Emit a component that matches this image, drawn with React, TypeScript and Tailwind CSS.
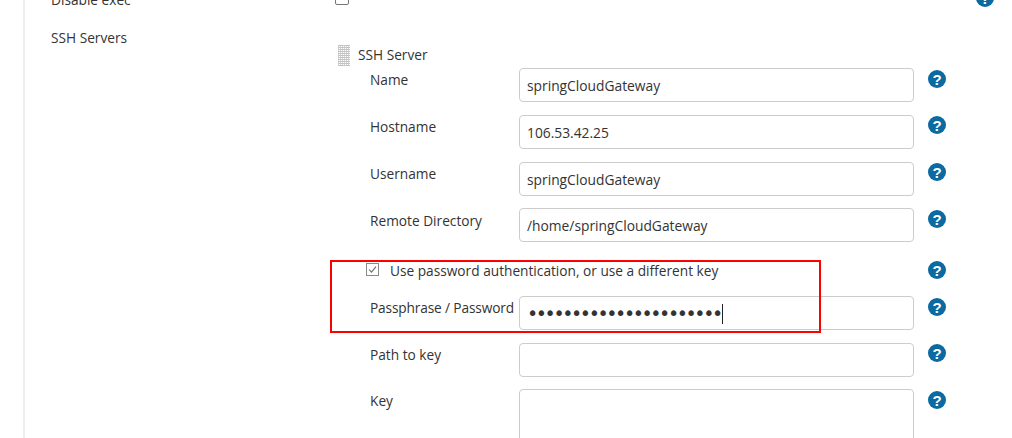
const font = { fontFamily: '"Open Sans","Noto Sans",sans-serif' };

function Help({ className = "" }: { className?: string }) {
  return (
    <div className={"w-[18px] h-[18px] rounded-full bg-[#0b6aa2] text-white flex items-center justify-center shrink-0 text-[15px] leading-none font-bold " + className} style={{ fontFamily: '"Liberation Sans",sans-serif' }}>
      ?
    </div>
  );
}

function Row({ label, value, mt, dots, tall, labelClass = "pt-[2px]", helpClass = "mt-[2px]" }: { label: string; value?: string; mt: string; dots?: boolean; tall?: boolean; labelClass?: string; helpClass?: string }) {
  return (
    <div className={"flex items-start " + mt}>
      <div className={"w-[149px] shrink-0 text-[13.7px] leading-[20px] whitespace-nowrap " + labelClass}>{label}</div>
      <div className={(tall ? "h-[70px] " : "h-[34px] ") + "w-[395px] shrink-0 rounded-[4px] border border-[#cccccc] bg-white pl-[7px] pt-[3px] flex items-center text-[13.8px] text-[#333]"}>
        {dots ? (
          <span className="flex items-center -mt-[2px]">
            <span className="text-[19px] leading-none tracking-[-2.4px] text-[#333]" style={{ fontFamily: '"DejaVu Sans",sans-serif' }}>{value}</span>
            <span className="w-px h-[20px] bg-[#222] ml-[1px]" />
          </span>
        ) : value}
      </div>
      <Help className={"ml-[14px] " + helpClass} />
    </div>
  );
}

export default function App() {
  return (
    <div className="relative w-[1012px] h-[438px] overflow-hidden bg-white text-[#333]" style={font}>
      <div className="ml-[23px] h-[448px] border-l-2 border-[#eeeeee] pl-[26px]">
        <div className="flex items-start -mt-[10px] h-[16px]">
          <div className="w-[284px] text-[13.7px] leading-[20px]">Disable exec</div>
          <div className="w-[14px] h-[14px] mt-[1px] border border-[#767676] rounded-[2px] bg-white" />
          <Help className="ml-[627px] -mt-[1px]" />
        </div>
        <div className="flex items-start mt-[25px]">
          <div className="w-[288px] text-[13.7px] leading-[20px] -mt-[3px]">SSH Servers</div>
          <div className="flex-1">
            <div className="flex items-center mt-[14px] h-[20px] -ml-[1px]">
              <div
                className="w-[12px] h-[21px] mr-[8px] bg-[repeating-linear-gradient(0deg,#c4c4c4_0,#c4c4c4_1px,transparent_1px,transparent_2px),repeating-linear-gradient(90deg,#d4d4d4_0,#d4d4d4_1px,transparent_1px,transparent_2px)]"
              />
              <span className="text-[13.7px] leading-[20px]">SSH Server</span>
            </div>
            <div className="ml-[31px]">
              <Row label="Name" value="springCloudGateway" mt="mt-[3px]" />
              <Row label="Hostname" value="106.53.42.25" mt="mt-[13px]" helpClass="mt-[1px]" />
              <Row label="Username" value="springCloudGateway" mt="mt-[13px]" helpClass="mt-[1px]" />
              <Row label="Remote Directory" value="/home/springCloudGateway" mt="mt-[12px]" labelClass="pt-[3px]" />
              <div className="flex items-center h-[20px] mt-[18px]">
                <svg width="14" height="14" viewBox="0 0 14 14" className="-ml-[4px] mr-[10px] shrink-0">
                  <rect x="0.5" y="0.5" width="12" height="12" fill="white" stroke="#8a8a8a" />
                  <path d="M3 6.5l2.5 2.7L10 3.7" fill="none" stroke="#6a6a6a" strokeWidth="1.1" />
                </svg>
                <span className="text-[13.7px] leading-[20px] flex-1 pt-[1px]">Use password authentication, or use a different key</span>
                <Help className="mr-[66px]" />
              </div>
              <Row label="Passphrase / Password" value="••••••••••••••••••••••" mt="mt-[16px]" dots labelClass="pt-[2px] tracking-[-0.14px]" />
              <Row label="Path to key" mt="mt-[13px]" helpClass="mt-[1px]" />
              <Row label="Key" mt="mt-[12px]" tall />
            </div>
          </div>
        </div>
      </div>
      <div className="absolute left-[330px] top-[260px] w-[491px] h-[73px] border-2 border-[#ff0000]" />
    </div>
  );
}
